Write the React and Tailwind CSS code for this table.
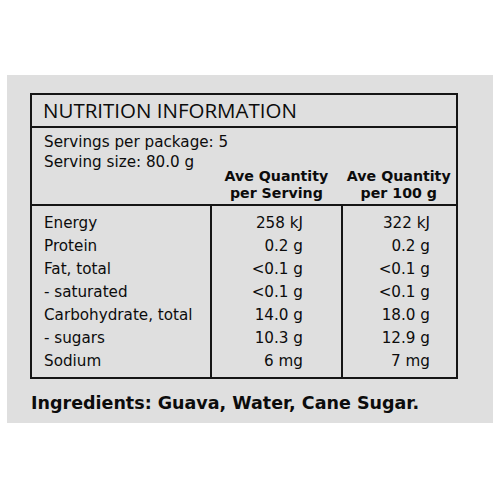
export default function App() {
  const rows = [
    ["Energy", "258 kJ", "322 kJ"],
    ["Protein", "0.2 g", "0.2 g"],
    ["Fat, total", "<0.1 g", "<0.1 g"],
    ["- saturated", "<0.1 g", "<0.1 g"],
    ["Carbohydrate, total", "14.0 g", "18.0 g"],
    ["- sugars", "10.3 g", "12.9 g"],
    ["Sodium", "6 mg", "7 mg"],
  ];

  return (
    <div className="w-[500px] h-[500px] bg-white pt-[75px] pl-[7px]">
      <div
        className="w-[486px] h-[348px] bg-[#dfdfdf] pt-[18px] pl-[23px] text-[#0c0c0c]"
        style={{ fontFamily: '"DejaVu Sans", Verdana, sans-serif' }}
      >
        {/* Label box */}
        <div className="w-[428px] border-2 border-[#151515]">
          <div className="h-[33px] border-b-2 border-[#151515] pl-[11px] flex items-center">
            <span
              className="text-[20.5px] font-normal"
              style={{ fontFamily: '"Open Sans", sans-serif' }}
            >
              NUTRITION INFORMATION
            </span>
          </div>

          <div className="h-[78px] border-b-2 border-[#151515] pl-[12px] pt-[4px]">
            <div className="text-[15.2px] leading-[20px]">Servings per package: 5</div>
            <div className="text-[15.2px] leading-[20px]">Serving size: 80.0 g</div>
            <div className="flex -mt-[4px] text-[14.2px] font-bold leading-[17px]">
              <div className="w-[168px]" />
              <div className="w-[131px] text-center">
                Ave Quantity
                <br />
                per Serving
              </div>
              <div className="w-[115px] text-center">
                Ave Quantity
                <br />
                per 100 g
              </div>
            </div>
          </div>

          <div className="flex h-[171px] text-[15.2px] leading-[23px]">
            <div className="w-[180px] border-r-2 border-[#151515] pl-[12px] pt-[6px]">
              {rows.map((r) => (
                <div key={r[0]}>{r[0]}</div>
              ))}
            </div>
            <div className="w-[131px] border-r-2 border-[#151515] pr-[38px] pt-[6px] text-right">
              {rows.map((r) => (
                <div key={r[0]}>{r[1]}</div>
              ))}
            </div>
            <div className="flex-1 pr-[26px] pt-[6px] text-right">
              {rows.map((r) => (
                <div key={r[0]}>{r[2]}</div>
              ))}
            </div>
          </div>
        </div>

        <div className="mt-[11px] ml-[1px] text-[17.5px] font-bold">
          Ingredients: Guava, Water, Cane Sugar.
        </div>
      </div>
    </div>
  );
}
